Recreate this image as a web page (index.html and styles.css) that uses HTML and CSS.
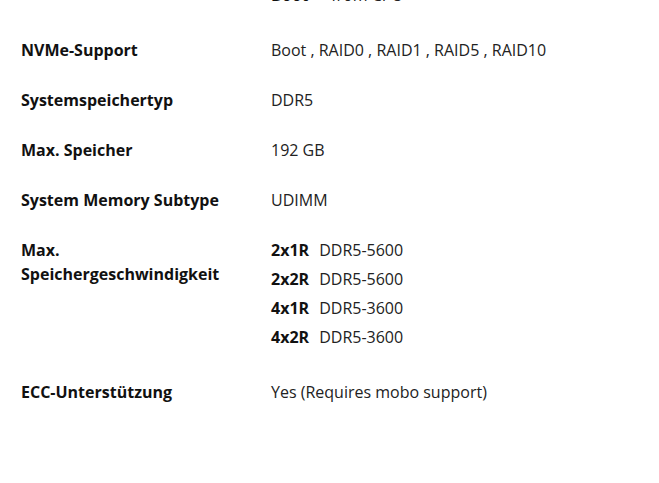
FILE: index.html
```html
<!DOCTYPE html>
<html lang="de">
<head>
    <meta charset="UTF-8">
    <meta name="viewport" content="width=device-width, initial-scale=1.0">
    <title>Spezifikationen</title>
    <link rel="stylesheet" href="styles.css">
</head>
<body>
    <div class="specs">
        <div class="spec-row">
            <div class="spec-label">PCIe-Unterstützung</div>
            <div class="spec-value">
                <div class="sub-line"><strong>PCIe</strong> 5.0</div>
                <div class="sub-line"><strong class="wide">Boot</strong> from CPU</div>
            </div>
        </div>
        <div class="spec-row">
            <div class="spec-label">NVMe-Support</div>
            <div class="spec-value">Boot , RAID0 , RAID1 , RAID5 , RAID10</div>
        </div>
        <div class="spec-row">
            <div class="spec-label">Systemspeichertyp</div>
            <div class="spec-value">DDR5</div>
        </div>
        <div class="spec-row">
            <div class="spec-label">Max. Speicher</div>
            <div class="spec-value">192 GB</div>
        </div>
        <div class="spec-row">
            <div class="spec-label">System Memory Subtype</div>
            <div class="spec-value">UDIMM</div>
        </div>
        <div class="spec-row">
            <div class="spec-label">Max. Speichergeschwindigkeit</div>
            <div class="spec-value">
                <div class="sub-line"><strong>2x1R</strong> DDR5-5600</div>
                <div class="sub-line"><strong>2x2R</strong> DDR5-5600</div>
                <div class="sub-line"><strong>4x1R</strong> DDR5-3600</div>
                <div class="sub-line"><strong>4x2R</strong> DDR5-3600</div>
            </div>
        </div>
        <div class="spec-row">
            <div class="spec-label">ECC-Unterstützung</div>
            <div class="spec-value">Yes (Requires mobo support)</div>
        </div>
    </div>
</body>
</html>
```

FILE: styles.css
```css
body {
    margin: 0;
    padding: 0;
    background: #fff;
    color: #1a1a1a;
    font-family: "Open Sans", Arial, sans-serif;
    font-size: 16px;
    line-height: 24px;
}
.specs {
    margin-top: -46px; /* page is scrolled a little */
    padding: 0 21px;
    display: flex;
    flex-direction: column;
    gap: 26px;
}
.spec-row {
    display: grid;
    grid-template-columns: 230px 1fr;
    column-gap: 20px;
}
.spec-label {
    font-weight: 700;
    color: #111;
}
.spec-value {
    color: #222;
}
.sub-line {
    margin-bottom: 5px;
}
.sub-line strong {
    display: inline-block;
    width: 44px;
    color: #111;
}
.sub-line strong.wide {
    width: 56px;
}
```
